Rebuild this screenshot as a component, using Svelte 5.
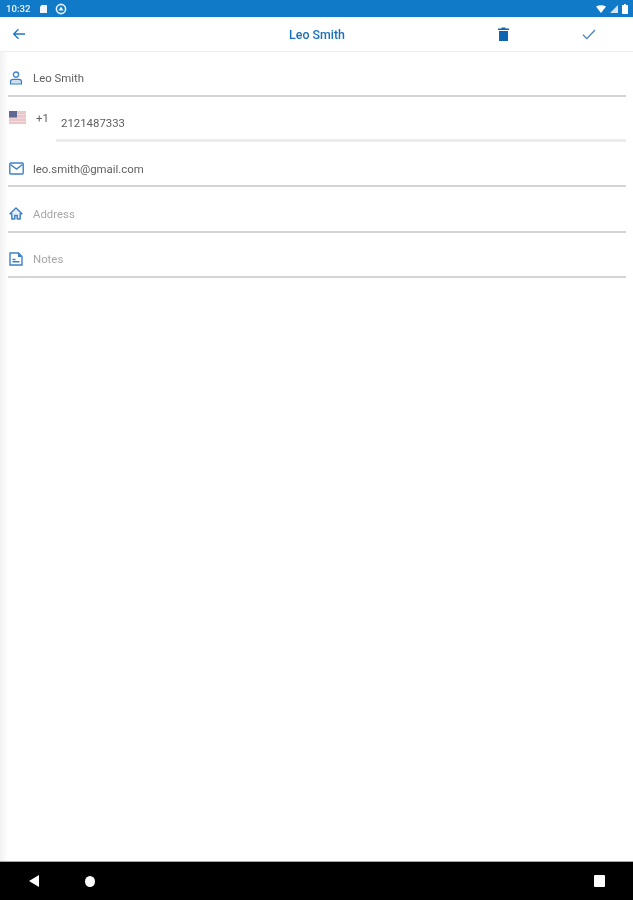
<script>
  const fields = [
    { id: 'name', value: 'Leo Smith', filled: true },
    { id: 'phone' },
    { id: 'mail', value: 'leo.smith@gmail.com', filled: true },
    { id: 'home', value: 'Address', filled: false },
    { id: 'notes', value: 'Notes', filled: false }
  ];
</script>

<div class="screen">
  <header class="status">
    <span class="time">10:32</span>
    <svg class="st-icon" viewBox="0 0 9 10" width="9" height="10"><path d="M2.500 1H8v8H1V3z" fill="#f2f6fb"/></svg>
    <svg class="st-icon" viewBox="0 0 12 12" width="12" height="12"><circle cx="6" cy="6" r="4.600" fill="none" stroke="#e6eff8" stroke-width="1.600"/><path d="M3.500 7.500 6 3.500l2.500 4z" fill="#e6eff8"/></svg>
    <span class="spacer"></span>
    <svg viewBox="0 0 10 8" width="10" height="8"><path d="M0 1.500Q5-1 10 1.500L5 8z" fill="#fff"/></svg>
    <svg viewBox="0 0 8 8" width="8" height="8"><path d="M8 0v8H0z" fill="#d5e4f3"/></svg>
    <svg viewBox="0 0 6 10" width="6" height="10"><path d="M2 0h2v1h2v9H0V1h2z" fill="#fff"/></svg>
  </header>

  <nav class="toolbar">
    <svg class="back" viewBox="0 0 14 12" width="14" height="12"><path d="M13 6H2M6.500 1.200 1.700 6l4.800 4.800" fill="none" stroke="#1a76c4" stroke-width="1.300"/></svg>
    <h1>Leo Smith</h1>
    <svg class="trash" viewBox="0 0 11 14" width="11" height="14"><path d="M0 1.500h3.500V.5h4v1H11v1.600H0zM1 4h9v10H1z" fill="#0f66b0"/></svg>
    <svg class="check" viewBox="0 0 14 11" width="14" height="11"><path d="M1 5.800 4.800 9.600 13 1" fill="none" stroke="#4a82b6" stroke-width="1.300"/></svg>
  </nav>

  <main class="form">
    {#each fields as f}
      {#if f.id === 'phone'}
        <div class="phone">
          <svg class="flag" viewBox="0 0 17 13" width="17" height="13">
            <rect width="17" height="13" fill="#e8c6ca"/>
            <path d="M0 3.500h17M0 7h17M0 10.500h17" stroke="#f1dcdd" stroke-width="1.200"/>
            <rect width="8" height="6.500" fill="#5f6893"/>
          </svg>
          <span class="code">+1</span>
          <div class="number">2121487333</div>
        </div>
      {:else}
        <div class="row">
          <span class="icon">
            {#if f.id === 'name'}
              <svg viewBox="0 0 14 14" width="14" height="14"><circle cx="7" cy="3.600" r="2.600" fill="none" stroke="#3f82c4" stroke-width="1.300"/><path d="M1.500 13v-2.200Q1.500 8.400 4 8.400h6q2.500 0 2.500 2.400V13z" fill="#cfe0f1" stroke="#3f82c4" stroke-width="1.200"/></svg>
            {:else if f.id === 'mail'}
              <svg viewBox="0 0 15 13" width="15" height="13"><rect x=".8" y="1" width="13.400" height="11" rx="1" fill="#fff" stroke="#3f82c4" stroke-width="1.400"/><path d="M1.500 2.500 7.500 7l6-4.500" fill="none" stroke="#3f82c4" stroke-width="1.400"/></svg>
            {:else if f.id === 'home'}
              <svg viewBox="0 0 14 13" width="14" height="13"><path d="M7 1 1 6.800h1.800V12h3V8.500h2.400V12h3V6.800H13z" fill="#e6eff8" stroke="#3f82c4" stroke-width="1.500" stroke-linejoin="round"/></svg>
            {:else}
              <svg viewBox="0 0 14 14" width="14" height="14"><path d="M1 1h8.500L13 4.500V13H1z" fill="#fff" stroke="#3f82c4" stroke-width="1.400"/><path d="M9 1v4h4" fill="#3f82c4"/><path d="M3.500 9.800h7M3.500 7.500h3" stroke="#3f82c4" stroke-width="1.400"/></svg>
            {/if}
          </span>
          <div class="value" class:placeholder={!f.filled}>{f.value}</div>
        </div>
      {/if}
    {/each}
  </main>

  <footer class="navbar">
    <svg viewBox="0 0 10 12" width="10" height="12"><path d="M10 0v12L0 6z" fill="#fff"/></svg>
    <span class="dot"></span>
    <span class="spacer"></span>
    <span class="square"></span>
  </footer>
</div>

<style>
  :global(body) { margin: 0; background: #fff; }
  .screen {
    width: 633px;
    height: 900px;
    display: flex;
    flex-direction: column;
    font-family: Roboto, "Liberation Sans", sans-serif;
    background: linear-gradient(to right, #f1f1f1, #fff 8px);
    overflow: hidden;
    filter: blur(0.5px);
  }
  .status {
    height: 17px;
    flex: none;
    background: #1079c8;
    display: flex;
    align-items: center;
    gap: 4px;
    padding: 0 5px 0 6px;
    box-sizing: border-box;
    color: #eef5fb;
  }
  .time { font-size: 9.600px; font-weight: 500; margin-right: 5px; }
  .st-icon { margin-right: 3px; }
  .spacer { flex: 1; }
  .toolbar {
    height: 35px;
    flex: none;
    background: #fff;
    border-bottom: 1px solid #eeeeee;
    display: flex;
    align-items: center;
    box-sizing: border-box;
  }
  .back { margin-left: 12px; flex: none; }
  h1 {
    margin: 0 0 0 146px;
    width: 290px;
    flex: none;
    font-size: 12.400px;
    font-weight: 500;
    color: #1a70ba;
    text-align: center;
  }
  .trash { margin-left: 36px; flex: none; }
  .check { margin-left: 73px; flex: none; }
  .form {
    flex: 1;
    padding: 0 7px 0 8px;
    display: flex;
    flex-direction: column;
  }
  .row {
    height: 45.300px;
    box-sizing: border-box;
    display: flex;
    align-items: center;
    border-bottom: 2px solid #d4d4d4;
    padding-top: 10px;
  }
  .row:first-child { height: 45px; padding-top: 8px; }
  .icon { width: 25px; display: flex; padding-left: 1px; box-sizing: border-box; }
  .value { font-size: 11.400px; color: #5f5f5f; }
  .placeholder { color: #a6a6a6; }
  .phone {
    height: 45px;
    box-sizing: border-box;
    position: relative;
    display: flex;
    align-items: flex-start;
    padding: 14px 0 0 1px;
  }
  .code { font-size: 11.400px; color: #5f5f5f; margin-left: 10px; line-height: 14px; }
  .number {
    position: absolute;
    left: 48px;
    right: 0;
    bottom: 0;
    height: 30px;
    box-sizing: border-box;
    border-bottom: 3px solid #ececec;
    font-size: 11.400px;
    color: #5f5f5f;
    padding: 4px 0 0 5px;
    line-height: 14px;
  }
  .navbar {
    height: 39px;
    flex: none;
    background: #000;
    border-top: 1px solid #a8a8a8;
    box-sizing: border-box;
    display: flex;
    align-items: center;
    padding: 0 28px 0 29px;
  }
  .dot {
    width: 10px;
    height: 11px;
    border-radius: 50%;
    background: #fff;
    margin-left: 46px;
  }
  .square {
    width: 11px;
    height: 12px;
    border-radius: 1px;
    background: #fff;
  }
</style>
